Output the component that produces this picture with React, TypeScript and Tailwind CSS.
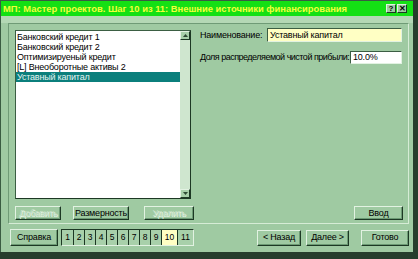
import { FC, ReactNode } from "react";

const font = { fontFamily: '"Liberation Sans", Arial, sans-serif' };

interface BtnProps {
  children: ReactNode;
  disabled?: boolean;
  className?: string;
}

// raised 3D button in the sage palette
const Btn: FC<BtnProps> = ({ children, disabled, className }) => (
  <div
    className={`flex items-center justify-center border border-t-[#e2f2e2] border-l-[#e2f2e2] border-b-[#1d3824] border-r-[#1d3824] bg-[#9fcaa2] shadow-[inset_-1px_-1px_0_#6c9a74] text-[9px] tracking-[-0.2px] leading-none ${
      disabled ? "text-[#c4dfc5] [text-shadow:1px_1px_0_#e8f5e8]" : "text-black"
    } ${className ?? ""}`}
  >
    {children}
  </div>
);

const items = [
  "Банковский кредит 1",
  "Банковский кредит 2",
  "Оптимизируеный кредит",
  "[L] Внеоборотные активы 2",
  "Уставный капитал",
];

const steps = ["1", "2", "3", "4", "5", "6", "7", "8", "9", "10", "11"];

const ArrowBox: FC<{ up?: boolean }> = ({ up }) => (
  <div className="w-[10px] h-[9px] flex items-center justify-center bg-[#a8d0aa] border border-t-[#e2f2e2] border-l-[#e2f2e2] border-b-[#1d3824] border-r-[#1d3824]">
    <svg width="5" height="3" viewBox="0 0 5 3">
      <path d={up ? "M2.5 0 L5 3 L0 3 Z" : "M0 0 L5 0 L2.5 3 Z"} fill="#2d4a33" />
    </svg>
  </div>
);

export default function App() {
  return (
    <div className="w-[418px] h-[259px] bg-[#263d2c] overflow-hidden" style={font}>
      <div className="w-[413px] h-[252px] bg-[#9fcaa2] border-l border-t border-[#3a5c42] flex flex-col">
        {/* TITLE */}
        <div className="h-[15px] bg-[#14e014] flex items-center justify-between pl-[2px] pr-[6px]">
          <span className="text-[9.4px] font-bold text-[#f2ff3a] leading-none whitespace-nowrap">
            МП: Мастер проектов. Шаг 10 из 11: Внешние источники финансирования
          </span>
          <div className="flex gap-px">
            <div className="w-[10px] h-[9px] bg-[#9fcaa2] border border-t-[#e2f2e2] border-l-[#e2f2e2] border-b-[#1d3824] border-r-[#1d3824] flex items-center justify-center text-[8px] font-bold leading-none text-black">
              ?
            </div>
            <div className="w-[10px] h-[9px] bg-[#9fcaa2] border border-t-[#e2f2e2] border-l-[#e2f2e2] border-b-[#1d3824] border-r-[#1d3824] flex items-center justify-center text-[8px] font-bold leading-none text-black">
              ✕
            </div>
          </div>
        </div>

        <div className="h-[7px] bg-[#b4d8b5]" />

        {/* PANEL */}
        <div className="ml-[7px] w-[401px] h-[201px] border border-t-[#6f9b76] border-l-[#6f9b76] border-b-[#d6ecd6] border-r-[#d6ecd6] px-[6px] pt-[6px] flex flex-col">
          <div className="flex">
            {/* LIST */}
            <div className="w-[176px] h-[169px] bg-white border border-t-[#3b5e43] border-l-[#3b5e43] border-b-[#1d3824] border-r-[#1d3824] flex">
              <div className="flex-1 flex flex-col pt-px">
                {items.map((item, i) => (
                  <div
                    key={i}
                    className={`h-[10px] pl-px text-[9px] tracking-[-0.2px] leading-[10px] whitespace-nowrap ${
                      i === 4 ? "bg-[#0b7f7c] text-[#e6f4f2]" : "text-black"
                    }`}
                  >
                    {item}
                  </div>
                ))}
              </div>
              <div className="w-[10px] bg-[#cfe6cf] flex flex-col justify-between">
                <ArrowBox up />
                <ArrowBox />
              </div>
            </div>

            {/* FORM */}
            <div className="ml-[9px] flex flex-col gap-[9px] text-[9px] tracking-[-0.2px]">
              <div className="flex items-center h-[14px] -mt-[2px]">
                <span className="w-[67px] leading-none">Наименование:</span>
                <div className="w-[135px] h-[14px] bg-[#ffffc4] border border-t-[#3b5e43] border-l-[#3b5e43] border-b-[#e2f2e2] border-r-[#e2f2e2] leading-[12px] pl-[2px]">
                  Уставный капитал
                </div>
              </div>
              <div className="flex items-center h-[13px]">
                <span className="w-[150px] leading-none whitespace-nowrap tracking-[-0.5px]">
                  Доля распределяемой чистой прибыли:
                </span>
                <div className="w-[52px] h-[13px] bg-white border border-t-[#3b5e43] border-l-[#3b5e43] border-b-[#e2f2e2] border-r-[#e2f2e2] leading-[11px] pl-[2px]">
                  10.0%
                </div>
              </div>
            </div>
          </div>

          {/* PANEL BUTTONS */}
          <div className="flex items-center mt-[7px]">
            <Btn disabled className="w-[46px] h-[14px]">Добавить</Btn>
            <Btn className="w-[56px] h-[14px] ml-[12px]">Размерность</Btn>
            <Btn disabled className="w-[50px] h-[14px] ml-[15px]">Удалить</Btn>
            <Btn className="w-[49px] h-[14px] ml-auto mr-[-1px]">Ввод</Btn>
          </div>
        </div>

        {/* FOOTER */}
        <div className="flex items-center pl-[9px] pr-[4px] mt-[5px]">
          <Btn className="w-[48px] h-[17px]">Справка</Btn>
          <div className="ml-[3px] flex h-[17px] border border-t-[#1d3824] border-l-[#1d3824] border-b-[#e2f2e2] border-r-[#e2f2e2]">
            {steps.map((s) => (
              <div
                key={s}
                className={`h-full flex items-center justify-center text-[8.5px] leading-none border-l border-[#1d3824] first:border-l-0 ${
                  s.length > 1 ? "w-[16px]" : "w-[11px]"
                } ${s === "10" ? "bg-[#ffffc4]" : "bg-[#a8d0aa]"}`}
              >
                {s}
              </div>
            ))}
          </div>
          <Btn className="w-[44px] h-[16px] ml-auto">&lt; Назад</Btn>
          <Btn className="w-[43px] h-[16px] ml-[5px]">Далее &gt;</Btn>
          <Btn className="w-[48px] h-[16px] ml-[12px]">Готово</Btn>
        </div>
      </div>
    </div>
  );
}
